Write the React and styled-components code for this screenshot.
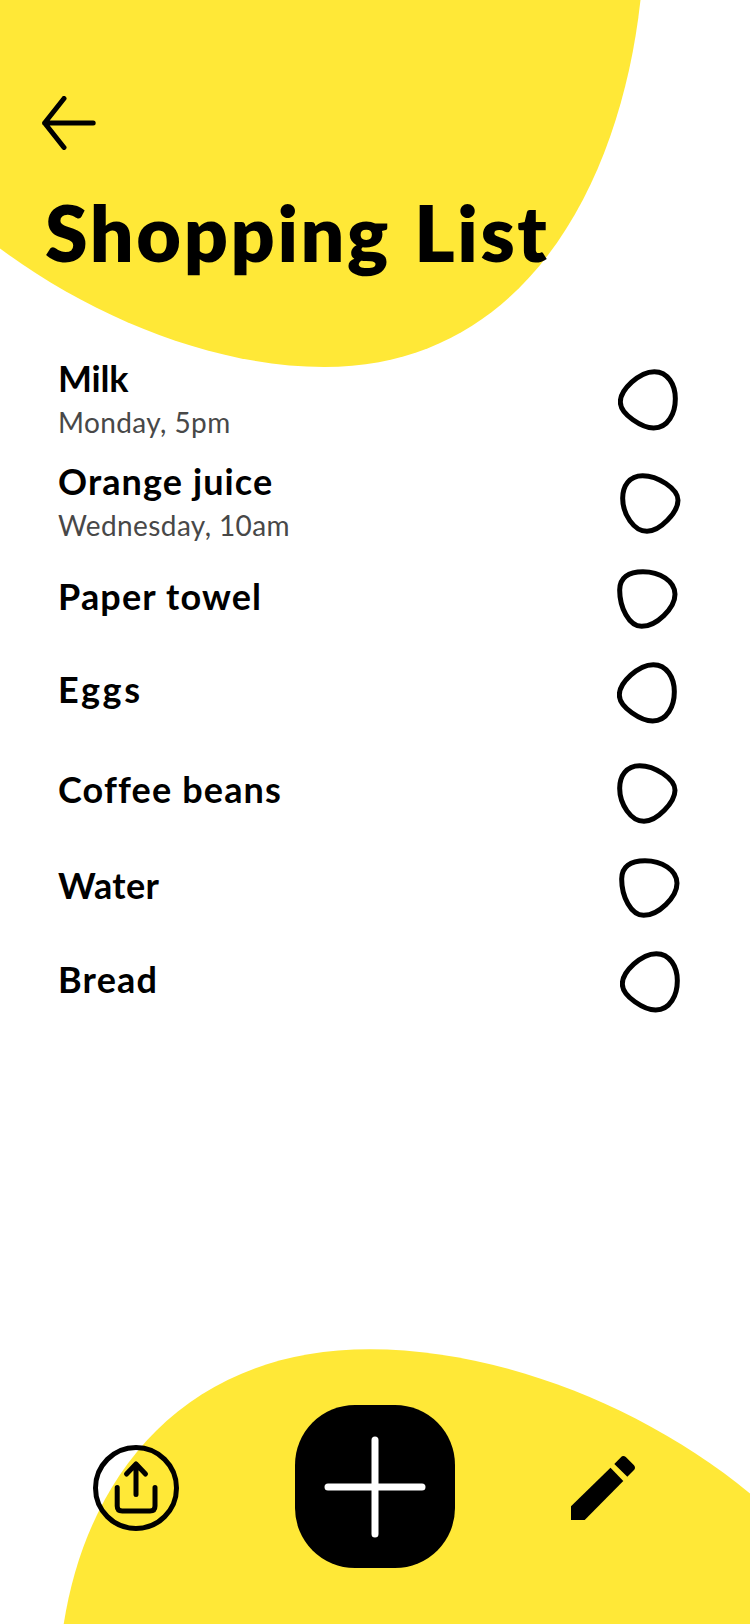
import React from "react";
import styled, { createGlobalStyle } from "styled-components";

const GlobalStyle = createGlobalStyle`
  * { box-sizing: border-box; }
  body { margin: 0; background: #fff; }
  button { border: 0; padding: 0; background: none; color: inherit; font: inherit; cursor: pointer; }
`;

const Screen = styled.div`
  position: relative;
  display: flex;
  flex-direction: column;
  width: 750px;
  height: 1624px;
  overflow: hidden;
  background: #fff;
  color: #000;
  font-family: Lato, "Liberation Sans", sans-serif;
`;

const Backdrop = styled.svg`
  position: absolute;
  inset: 0;
  width: 750px;
  height: 1624px;
  fill: #ffe837;
`;

const Header = styled.header`
  position: relative;
  display: flex;
  flex-direction: column;
  align-items: flex-start;
  height: 347px;
  padding: 96px 0 0 42px;
`;

const BackButton = styled.button`
  height: 54px;
  svg { display: block; }
`;

const Title = styled.h1`
  margin: 36px 0 0 3px;
  font-size: 77px;
  font-weight: 800;
  line-height: 92px;
  letter-spacing: 2.6px;
  word-spacing: 3px;
  white-space: nowrap;
`;

const List = styled.ul`
  position: relative;
  display: flex;
  flex-direction: column;
  flex: 1;
  margin: 0;
  padding: 0 68px 0 58px;
  list-style: none;
`;

const Item = styled.li`
  display: flex;
  align-items: flex-start;
  justify-content: space-between;
  height: ${(p) => p.$height}px;
`;

const ItemText = styled.div`
  display: flex;
  flex-direction: column;
  padding-top: 9px;
`;

const Name = styled.span`
  font-size: 36px;
  font-weight: 700;
  line-height: 44px;
  letter-spacing: ${(p) => p.$tracking}px;
  white-space: nowrap;
`;

const When = styled.span`
  margin-top: 2px;
  color: #484848;
  font-size: 28px;
  line-height: 40px;
  letter-spacing: 0.4px;
  white-space: nowrap;
`;

const CheckSlot = styled.button`
  width: 65px;
  padding: ${(p) => p.$top}px 0 0 ${(p) => p.$left}px;
  svg { display: block; }
`;

const Footer = styled.footer`
  position: relative;
  display: flex;
  align-items: center;
  justify-content: space-between;
  height: 163px;
  margin-bottom: 56px;
  padding: 0 115px 0 93px;
`;

const IconButton = styled.button`
  padding-top: 2px;
  svg { display: block; }
`;

const AddButton = styled.button`
  display: grid;
  place-items: center;
  width: 160px;
  height: 163px;
  margin-right: 0;
  border-radius: 60px;
  background: #000;
  color: #fff;
`;

const PEBBLES = {
  left: "M109 8C150 8 172 48 172 89C172 132 151 177 107 177C74 177 7 137 7 99C7 62 64 8 109 8Z",
  right: "M68 8C112 8 174 46 174 82C174 118 120 175 81 175C42 175 8 124 8 76C8 40 27 8 68 8Z",
  top: "M78 8C128 8 174 36 174 76C174 118 118 172 74 172C36 172 8 116 8 63C8 26 34 8 78 8Z",
};

function Pebble({ shape }) {
  return (
    <svg width="62" height="62" viewBox="0 0 186 186" fill="none" stroke="#000" strokeWidth="15">
      <path d={PEBBLES[shape]} />
    </svg>
  );
}

const ITEMS = [
  { name: "Milk", when: "Monday, 5pm", shape: "left", height: 103, tracking: -0.2, top: 22.3, left: 1 },
  { name: "Orange juice", when: "Wednesday, 10am", shape: "right", height: 115, tracking: 1.1, top: 23, left: 3 },
  { name: "Paper towel", shape: "top", height: 93, tracking: 1.15, top: 4, left: 0.3 },
  { name: "Eggs", shape: "left", height: 100, tracking: 2.7, top: 4.3, left: 0 },
  { name: "Coffee beans", shape: "right", height: 96, tracking: 1.15, top: 5, left: 0 },
  { name: "Water", shape: "top", height: 94, tracking: 0.35, top: 4.3, left: 2 },
  { name: "Bread", shape: "left", height: 94, tracking: 1.2, top: 3.3, left: 3 },
];

export default function App() {
  return (
    <Screen>
      <GlobalStyle />
      <Backdrop viewBox="0 0 750 1624" aria-hidden="true">
        <path d="M640.5 0C620.5 182 526 367 324 367C216 367 95 319 0 248.5V0Z" />
        <path d="M63.7 1624C87 1475 185 1349.3 370 1349.3C500 1349.3 645 1407 750 1493.5V1624Z" />
      </Backdrop>

      <Header>
        <BackButton aria-label="Back">
          <svg width="54" height="54" fill="none" stroke="#000" strokeWidth="5" strokeLinecap="round" strokeLinejoin="round">
            <path d="M51.2 27H2.6M22 2.5L2.6 27L22 51.5" />
          </svg>
        </BackButton>
        <Title>Shopping List</Title>
      </Header>

      <List>
        {ITEMS.map((item) => (
          <Item key={item.name} $height={item.height}>
            <ItemText>
              <Name $tracking={item.tracking}>{item.name}</Name>
              {item.when && <When>{item.when}</When>}
            </ItemText>
            <CheckSlot aria-label={`Check ${item.name}`} $top={item.top} $left={item.left}>
              <Pebble shape={item.shape} />
            </CheckSlot>
          </Item>
        ))}
      </List>

      <Footer>
        <IconButton aria-label="Share">
          <svg width="86" height="86" fill="none" stroke="#000" strokeWidth="5" strokeLinecap="round" strokeLinejoin="round">
            <circle cx="43" cy="43" r="40.5" />
            <path d="M43 49.5V19M33.5 29L43 19L52.5 29" />
            <path d="M24.2 42.5V61Q24.2 66 29.2 66H57Q62 66 62 61V42.5" />
          </svg>
        </IconButton>
        <AddButton aria-label="Add item">
          <svg width="102" height="102" fill="none" stroke="currentColor" strokeWidth="7" strokeLinecap="round">
            <path d="M51 4V98M4 51H98" />
          </svg>
        </AddButton>
        <IconButton aria-label="Edit">
          <svg width="64" height="64" fill="#000">
            <path d="M0 50.3V64H13.7L52.3 25L39.5 11.8Z" />
            <path d="M43.3 8L49.7 1.5Q52 -1 54.8 1L63 9.3Q65 11.7 63 14L56.3 20.8Z" />
          </svg>
        </IconButton>
      </Footer>
    </Screen>
  );
}
